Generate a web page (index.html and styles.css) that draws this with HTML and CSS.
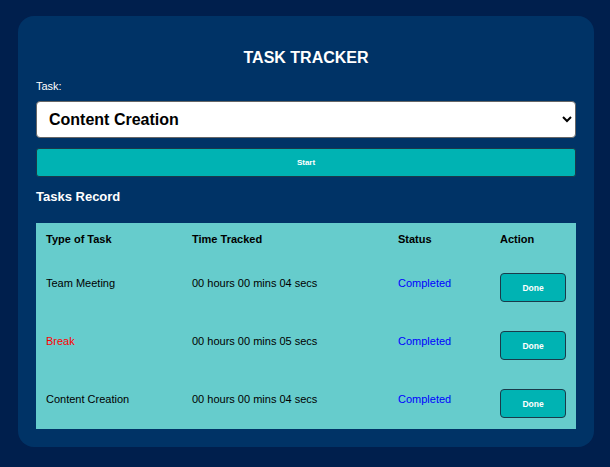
FILE: index.html
```html
<!DOCTYPE html>
<html lang="en">
<head>
    <meta charset="UTF-8">
    <meta name="viewport" content="width=device-width, initial-scale=1.0">
    <title>Task Tracker</title>
    <link rel="stylesheet" href="styles.css">
</head>
<body>
    <div class="container">
        <h1>TASK TRACKER</h1>
        <label for="task">Task:</label>
        <select id="task">
            <option value="meeting">Team Meeting</option>
            <option value="break">Break</option>
            <option value="content" selected>Content Creation</option>
        </select>
        <button type="button" class="start-btn">Start</button>
        <h2>Tasks Record</h2>
        <table class="records">
            <thead>
                <tr>
                    <th class="col-type">Type of Task</th>
                    <th class="col-time">Time Tracked</th>
                    <th class="col-status">Status</th>
                    <th class="col-action">Action</th>
                </tr>
            </thead>
            <tbody>
                <tr>
                    <td>Team Meeting</td>
                    <td>00 hours 00 mins 04 secs</td>
                    <td class="status">Completed</td>
                    <td><button type="button" class="done-btn">Done</button></td>
                </tr>
                <tr>
                    <td class="break">Break</td>
                    <td>00 hours 00 mins 05 secs</td>
                    <td class="status">Completed</td>
                    <td><button type="button" class="done-btn">Done</button></td>
                </tr>
                <tr>
                    <td>Content Creation</td>
                    <td>00 hours 00 mins 04 secs</td>
                    <td class="status">Completed</td>
                    <td><button type="button" class="done-btn">Done</button></td>
                </tr>
            </tbody>
        </table>
    </div>
</body>
</html>
```

FILE: styles.css
```css
* {
    box-sizing: border-box;
}
body {
    margin: 0;
    padding: 16px 16px 0 18px;
    background: #001f4d;
    font-family: 'Liberation Sans', Arial, sans-serif;
    font-size: 11px;
    color: #fff;
}
.container {
    background: #003366;
    border-radius: 16px;
    padding: 18px 18px 18px;
}
h1 {
    margin: 14px 0 13px;
    font-size: 16px;
    line-height: 19px;
    text-align: center;
}
label {
    display: block;
    line-height: 13px;
    margin-bottom: 8px;
}
select {
    display: block;
    width: 100%;
    height: 37px;
    padding: 0 8px 0 8px;
    border: 1px solid #666;
    border-radius: 4px;
    background: #fff;
    font-family: inherit;
    font-size: 16px;
    font-weight: bold;
    color: #000;
}
.start-btn {
    display: block;
    width: 100%;
    height: 29px;
    margin-top: 10px;
    background: #00b3b3;
    border: 1px solid #1a3a4a;
    border-radius: 3px;
    color: #fff;
    font-family: inherit;
    font-size: 8px;
    font-weight: bold;
}
h2 {
    margin: 12px 0 18px;
    font-size: 13px;
    line-height: 16px;
}
.records {
    width: 100%;
    border-collapse: collapse;
    background: #66cccc;
    color: #000;
}
.records th {
    padding: 10px;
    line-height: 12px;
    text-align: left;
}
.records td {
    padding: 18px 10px 11px;
    line-height: 20px;
    vertical-align: top;
}
.col-type {
    width: 146px;
}
.col-time {
    width: 206px;
}
.col-status {
    width: 102px;
}
.status {
    color: #0000ff;
}
.break {
    color: #ff0000;
}
.done-btn {
    display: block;
    width: 66px;
    height: 29px;
    background: #00b3b3;
    border: 1px solid #1a3a4a;
    border-radius: 4px;
    color: #fff;
    font-family: inherit;
    font-size: 8.5px;
    font-weight: bold;
}
```
